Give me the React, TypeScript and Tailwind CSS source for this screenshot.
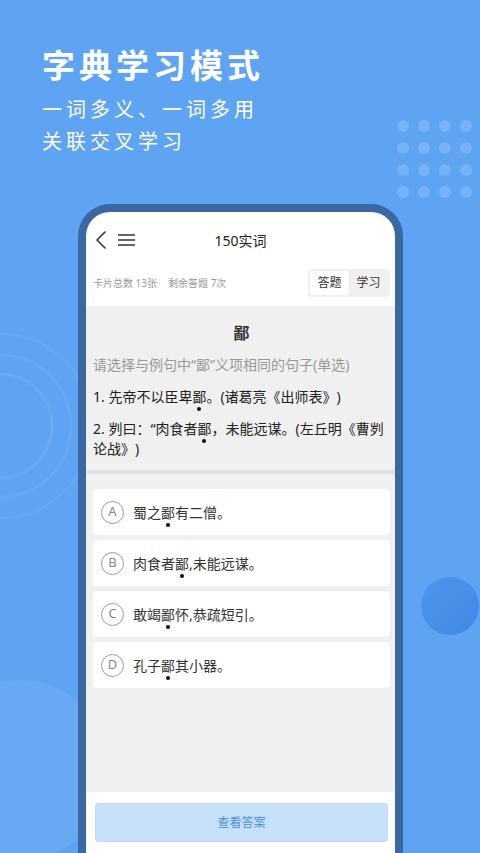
import React from "react";

const FONT = { fontFamily: '"Noto Sans", "Noto Sans CJK SC", sans-serif' };

// character with a dot underneath (着重号)
function Dot({ ch }: { ch: string }) {
  return (
    <span className="relative">
      {ch}
      <span className="absolute left-1/2 -translate-x-1/2 bottom-[-5px] w-[4px] h-[4px] rounded-full bg-[#111]" />
    </span>
  );
}

const options: Array<{ key: string; pre: string; post: string }> = [
  { key: "A", pre: "蜀之", post: "有二僧。" },
  { key: "B", pre: "肉食者", post: ",未能远谋。" },
  { key: "C", pre: "敢竭", post: "怀,恭疏短引。" },
  { key: "D", pre: "孔子", post: "其小器。" },
];

function Decor() {
  return (
    <svg className="absolute left-0 top-0" width="480" height="853">
      <circle cx="0" cy="426" r="52" fill="none" stroke="#ffffff" strokeOpacity="0.08" strokeWidth="3" />
      <circle cx="0" cy="426" r="71" fill="none" stroke="#ffffff" strokeOpacity="0.06" strokeWidth="3" />
      <circle cx="0" cy="426" r="92" fill="none" stroke="#ffffff" strokeOpacity="0.05" strokeWidth="3" />
      <circle cx="20" cy="770" r="90" fill="#ffffff" fillOpacity="0.06" />
      {[0, 1, 2, 3].map((r) =>
        [0, 1, 2, 3].map((c) => (
          <circle key={`${r}-${c}`} cx={403 + c * 21} cy={126 + r * 22} r="6" fill="#ffffff" fillOpacity="0.16" />
        ))
      )}
      <defs>
        <linearGradient id="ball" x1="0" y1="0" x2="1" y2="1">
          <stop offset="0" stopColor="#4f97ec" />
          <stop offset="1" stopColor="#3f87e3" />
        </linearGradient>
      </defs>
      <circle cx="450" cy="606" r="29" fill="url(#ball)" />
    </svg>
  );
}

export default function App() {
  return (
    <div className="relative w-[480px] h-[853px] overflow-hidden bg-[#5ea4f2] [text-spacing-trim:space-all]" style={FONT}>
      <Decor />
      <div className="relative pl-[42px] pt-[44px] text-white">
        <div className="text-[33px] leading-[44px] font-bold tracking-[4px]">字典学习模式</div>
        <div className="mt-[6px] text-[20px] leading-[32px] tracking-[4px]">一词多义、一词多用</div>
        <div className="text-[20px] leading-[32px] tracking-[4px]">关联交叉学习</div>
      </div>

      <div className="relative mt-[46px] ml-[78px] w-[325px] h-[649px] border-[8px] border-b-0 border-[#3a68a2] rounded-t-[32px] bg-white overflow-hidden flex flex-col">
        {/* header */}
        <div className="h-[56px] shrink-0 flex items-center px-[9px] relative">
          <svg width="12" height="18" viewBox="0 0 12 18" className="mr-[11px]">
            <path d="M10 1 L2 9 L10 17" fill="none" stroke="#333" strokeWidth="1.6" strokeLinecap="round" strokeLinejoin="round" />
          </svg>
          <svg width="17" height="14" viewBox="0 0 17 14">
            <path d="M0 2h17M0 7h17M0 12h17" stroke="#333" strokeWidth="1.4" />
          </svg>
          <div className="absolute inset-0 flex items-center justify-center text-[14px] text-[#222] pointer-events-none">150实词</div>
        </div>

        {/* stats */}
        <div className="shrink-0 flex items-center justify-between pl-[7px] pr-[5px] pt-[1px] pb-[9px]">
          <div className="text-[10px] text-[#999] flex gap-[11px]">
            <span>卡片总数 13张</span>
            <span>剩余答题 7次</span>
          </div>
          <div className="flex items-center h-[28px] w-[82px] p-[2px] rounded-[4px] bg-[#f0f0f0] text-[12px] text-[#333]">
            <div className="w-[39px] h-[24px] rounded-[3px] bg-white flex items-center justify-center">答题</div>
            <div className="flex-1 flex items-center justify-center">学习</div>
          </div>
        </div>

        {/* gray body */}
        <div className="flex-1 bg-[#f0f0f0] flex flex-col">
          <div className="pl-[7px] pr-[5px] pt-[14px] pb-[11px]">
            <div className="text-center text-[16px] leading-[26px] font-bold text-[#333]">鄙</div>
            <div className="mt-[9px] text-[14px] leading-[20px] text-[#999]">请选择与例句中“鄙”义项相同的句子(单选)</div>
            <div className="mt-[12px] text-[14px] leading-[20px] text-[#222]">
              1. 先帝不以臣卑<Dot ch="鄙" />。(诸葛亮《出师表》)
            </div>
            <div className="mt-[12px] text-[14px] leading-[20px] text-[#222]">
              <div>
                2. 刿曰：“肉食者<Dot ch="鄙" />，未能远谋。(左丘明《曹刿
              </div>
              <div>论战》)</div>
            </div>
          </div>
          <div className="h-[4px] bg-[#e2e2e2]" />
          <div className="pl-[7px] pr-[5px] pt-[15px] flex flex-col gap-[5px]">
            {options.map((o) => (
              <div key={o.key} className="h-[46px] rounded-[4px] bg-white flex items-center pl-[8px]">
                <div className="w-[23px] h-[23px] rounded-full border border-[#9a9a9a] flex items-center justify-center text-[13px] text-[#888]">
                  {o.key}
                </div>
                <div className="ml-[9px] text-[14px] text-[#333]">
                  {o.pre}
                  <Dot ch="鄙" />
                  {o.post}
                </div>
              </div>
            ))}
          </div>
        </div>

        {/* bottom */}
        <div className="h-[61px] shrink-0 bg-white pl-[9px] pr-[7px] pt-[11px]">
          <div className="h-[39px] rounded-[3px] bg-[#c7e1fb] border border-[#bcd9f7] flex items-center justify-center text-[12px] text-[#4a90e2]">
            查看答案
          </div>
        </div>
      </div>
    </div>
  );
}
